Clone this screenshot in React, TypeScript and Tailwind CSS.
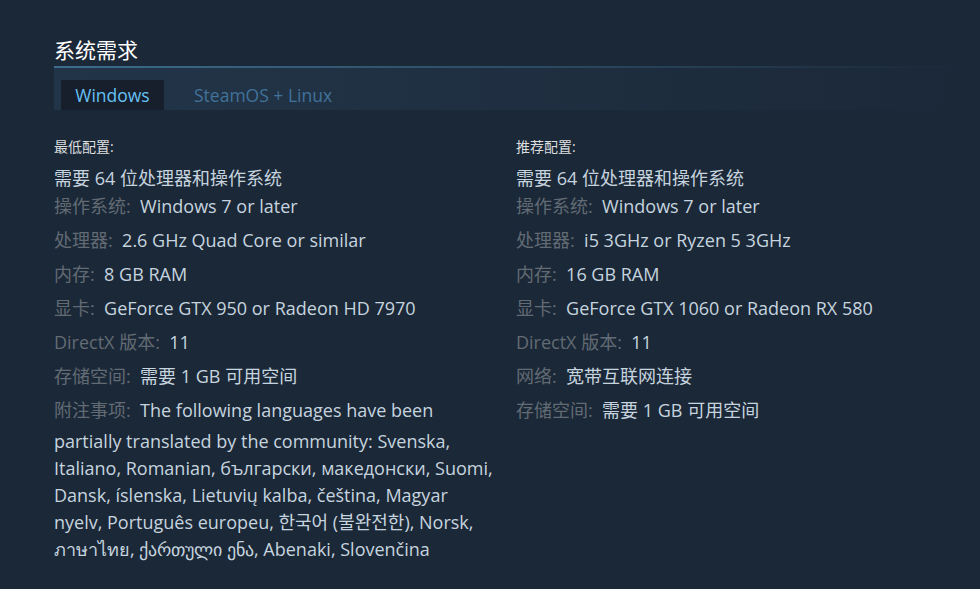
import React from 'react';

type Row = { label?: string; value: string };

const minimum: Row[] = [
  { label: '操作系统:', value: 'Windows 7 or later' },
  { label: '处理器:', value: '2.6 GHz Quad Core or similar' },
  { label: '内存:', value: '8 GB RAM' },
  { label: '显卡:', value: 'GeForce GTX 950 or Radeon HD 7970' },
  { label: 'DirectX 版本:', value: '11' },
  { label: '存储空间:', value: '需要 1 GB 可用空间' },
  {
    label: '附注事项:',
    value:
      'The following languages have been partially translated by the community: Svenska, Italiano, Romanian, български, македонски, Suomi, Dansk, íslenska, Lietuvių kalba, čeština, Magyar nyelv, Português europeu, 한국어 (불완전한), Norsk, ภาษาไทย, ქართული ენა, Abenaki, Slovenčina',
  },
];

const recommended: Row[] = [
  { label: '操作系统:', value: 'Windows 7 or later' },
  { label: '处理器:', value: 'i5 3GHz or Ryzen 5 3GHz' },
  { label: '内存:', value: '16 GB RAM' },
  { label: '显卡:', value: 'GeForce GTX 1060 or Radeon RX 580' },
  { label: 'DirectX 版本:', value: '11' },
  { label: '网络:', value: '宽带互联网连接' },
  { label: '存储空间:', value: '需要 1 GB 可用空间' },
];

function Column({ title, rows }: { title: string; rows: Row[] }) {
  return (
    <div className="w-[446px]">
      <div className="text-[14px] text-[#dcdedf] leading-[18px] h-[18px]">{title}</div>
      <ul className="mt-[11px]">
        <li className="text-[18px] leading-[22px] text-[#c6d4df] mb-[4px]">需要 64 位处理器和操作系统</li>
        {rows.map((r) => (
          <li key={r.label} className="text-[18px] leading-[27px] text-[#c6d4df] mb-[3px]">
            <span className="inline-block align-top pb-[4px] text-[#626b73]">{r.label}</span>
            <span>&nbsp; {r.value}</span>
          </li>
        ))}
      </ul>
    </div>
  );
}

export default function App() {
  return (
    <div
      className="w-full h-[589px] bg-[#1b2838] pl-[54px] pr-[18px] pt-[35px] overflow-hidden"
      style={{ fontFamily: '"Open Sans", "Noto Sans CJK SC", "Noto Sans", sans-serif' }}
    >
      <h2 className="text-[21px] leading-[31px] text-white font-normal">系统需求</h2>
      <div className="h-[2px] bg-gradient-to-r from-[#3d6c8d] via-[#2c4d66] to-transparent" />
      <div className="h-[42px] bg-gradient-to-r from-[#223548] via-[#1f2f41] to-[#1b2838] flex items-end pl-[7px]">
        <div className="h-[30px] w-[103px] bg-[#161f2b] flex items-center justify-center text-[17.5px] text-[#67c1f5]">
          Windows
        </div>
        <div className="h-[30px] ml-[30px] flex items-center text-[17.5px] text-[#41729a]">SteamOS + Linux</div>
      </div>
      <div className="flex gap-[16px] mt-[28px]">
        <Column title="最低配置:" rows={minimum} />
        <Column title="推荐配置:" rows={recommended} />
      </div>
    </div>
  );
}
